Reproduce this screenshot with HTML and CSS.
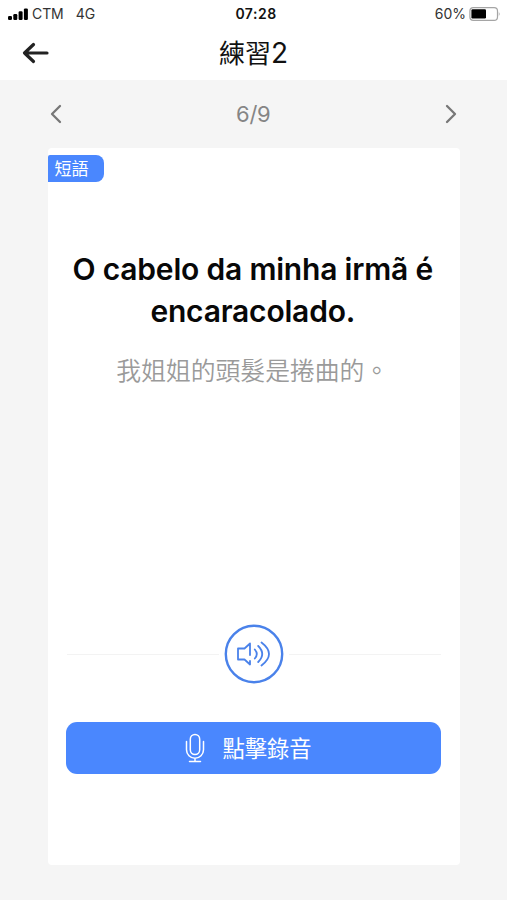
FILE: index.html
```html
<!DOCTYPE html>
<html lang="zh-Hant">
<head>
<meta charset="utf-8">
<meta name="viewport" content="width=device-width, initial-scale=1">
<title>練習2</title>
<link rel="stylesheet" href="styles.css">
</head>
<body>
<div class="status">
  <div class="status-left">
    <svg class="signal" viewBox="0 0 20 13" width="20" height="13"><rect x="0" y="8" width="4" height="4" rx="1.2"/><rect x="5.3" y="6" width="4" height="6" rx="1.2"/><rect x="10.6" y="3.2" width="4" height="8.8" rx="1.2"/><rect x="15.9" y=".4" width="4" height="11.6" rx="1.2"/></svg>
    <span class="carrier">CTM</span><span class="network">4G</span>
  </div>
  <div class="clock">07:28</div>
  <div class="status-right">
    <span class="percent">60%</span>
    <svg class="battery" viewBox="0 0 32 14" width="32" height="14"><rect x=".9" y=".7" width="27.6" height="12.6" rx="3.4" fill="#fff" stroke="#a5a5a5" stroke-width="1.2"/><rect x="2.4" y="2.3" width="14.6" height="9.2" rx="1.2"/><path d="M29.8 4.800q1.800 2.200 0 4.400z" fill="#a5a5a5"/></svg>
  </div>
</div>
<header class="nav">
  <svg class="back" viewBox="0 0 28 24" width="28" height="24"><path d="M12.5 3.5 3.5 12l9 8.5M3.5 12H26"/></svg>
  <h1>練習<span>2</span></h1>
</header>
<main>
  <div class="pager">
    <svg viewBox="0 0 14 22" width="14" height="22"><path d="M11 3 3 11l8 8"/></svg>
    <span class="count">6/9</span>
    <svg viewBox="0 0 14 22" width="14" height="22"><path d="M3 3l8 8-8 8"/></svg>
  </div>
  <section class="card">
    <div class="tag">短語</div>
    <h2>O cabelo da minha irmã é<br>encaracolado.</h2>
    <p class="translation">我姐姐的頭髮是捲曲的。</p>
    <div class="listen">
      <span class="rule"></span>
      <svg viewBox="0 0 60 60" width="60" height="60"><circle cx="30" cy="30" r="28.2" stroke-width="2.4"/><path d="M26 31V19.500L20.500 24.500H14V35.500H20.500L26 40.500V37M30.800 25.500q4 4.500 0 9M34.200 22q8 8 0 16M37.500 18.500q15 11.500 0 23" stroke-width="1.800"/></svg>
      <span class="rule"></span>
    </div>
    <button class="record">
      <svg viewBox="0 0 20 30" width="20" height="30"><rect x="5.3" y="1.5" width="9.4" height="20" rx="4.7"/><path d="M1.5 8.5v8.2a8.500 8.500 0 0 0 17 0V8.500M10 25.200v3.200M4.500 28.400h11"/></svg>
      <span>點擊錄音</span>
    </button>
  </section>
</main>
</body>
</html>
```
FILE: styles.css
```css
* { box-sizing: border-box; }
body {
  margin: 0;
  height: 900px;
  display: flex;
  flex-direction: column;
  background: #f5f5f5;
  color: #111;
  font-family: Inter, "Noto Sans CJK TC", sans-serif;
}
svg { display: block; flex: none; }
.status {
  height: 28px;
  padding: 0 6px 0 8px;
  display: grid;
  grid-template-columns: 1fr auto 1fr;
  align-items: center;
  background: #fff;
  font-size: 14px;
  line-height: 28px;
}
.status-left, .status-right { display: flex; align-items: center; }
.status-right { justify-content: flex-end; }
.battery { margin-top: -1px; }
.signal { margin-right: 4px; }
.carrier { color: #333; letter-spacing: -.1px; }
.network { color: #333; margin-left: 12px; }
.clock { font-weight: 600; letter-spacing: .5px; padding-left: 3px; }
.percent { color: #333; margin-right: 3px; }
.nav {
  height: 52px;
  display: grid;
  grid-template-columns: 1fr auto 1fr;
  align-items: center;
  padding: 0 21px 3px;
  background: #fff;
}
.nav h1 { margin: 0 0 -2px; font-size: 26px; line-height: 40px; font-weight: 400; }
.nav h1 span { font-size: 28px; line-height: 1; }
.back { fill: none; stroke: #222; stroke-width: 3.2; stroke-linecap: round; stroke-linejoin: round; }
main { padding: 0 47px 0 47.5px; }
.pager {
  height: 68px;
  padding: 0 2px 0 1px;
  display: flex;
  align-items: center;
  justify-content: space-between;
}
.pager svg { fill: none; stroke: #777; stroke-width: 2.3; stroke-linecap: round; stroke-linejoin: round; }
.count { font-size: 22px; letter-spacing: -.3px; color: #858585; }
.card {
  height: 717px;
  padding: 7px 19px 0;
  display: flex;
  flex-direction: column;
  border-radius: 4px;
  background: #fff;
}
.tag {
  width: 56px;
  height: 27px;
  margin-left: -19px;
  padding: 1px 0 0 7px;
  border-radius: 2px 8px 8px 0;
  background: #4a87fe;
  color: #fff;
  font-size: 17px;
  line-height: 27px;
}
h2 {
  margin: 66px -9px 0 -11px;
  text-align: center;
  font-size: 30px;
  line-height: 42px;
  font-weight: 600;
  letter-spacing: -.2px;
  color: #080808;
  white-space: nowrap;
}
.translation {
  margin: 21px 0 0 -2px;
  text-align: center;
  font-size: 24.8px;
  line-height: 36px;
  font-weight: 350;
  color: #9a9a9a;
  white-space: nowrap;
}
.listen { margin-top: 235px; display: flex; align-items: center; gap: 5px; }
.listen svg { fill: none; stroke: #4a82ea; stroke-linecap: round; stroke-linejoin: round; }
.rule { flex: 1; height: 1px; background: #f3f3f3; }
.record {
  height: 52px;
  margin: 38px 0 0 -.5px;
  padding: 0 10px 0 0;
  border: 0;
  border-radius: 11px;
  display: flex;
  align-items: center;
  justify-content: center;
  gap: 17px;
  background: #4a87fe;
  color: #fff;
  font: 400 22.3px/52px Inter, "Noto Sans CJK TC", sans-serif;
}
.record span { padding-top: 1px; }
.record svg { fill: none; stroke: #fff; stroke-width: 1.5; stroke-linecap: round; }
```
